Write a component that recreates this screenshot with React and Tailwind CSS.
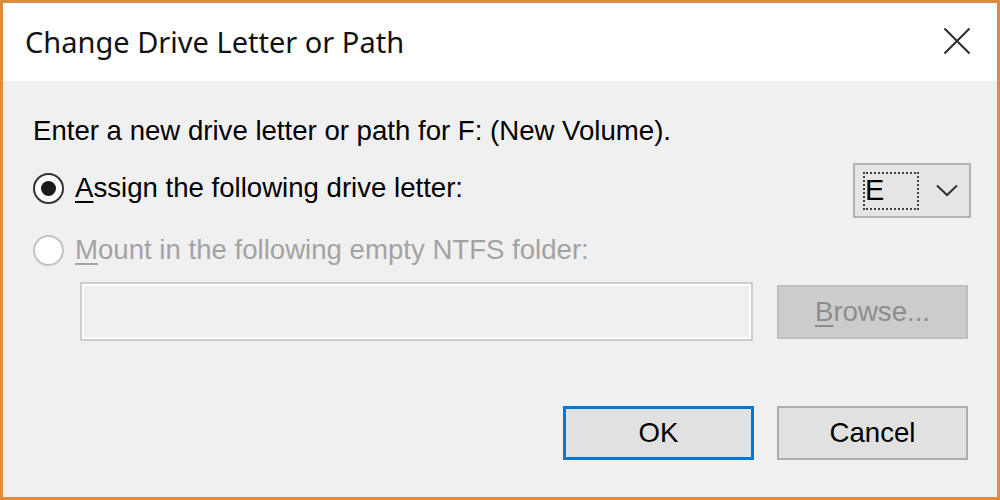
import React from "react";

const Radio = ({ checked, disabled }) => (
  <span
    className={`w-[31px] h-[31px] rounded-full border-2 flex items-center justify-center shrink-0 ${
      disabled ? "border-[#c4c4c4] bg-white" : "border-[#333333] bg-white"
    }`}
  >
    {checked && <span className="w-[15px] h-[15px] rounded-full bg-[#1b1b1b]" />}
  </span>
);

const Button = ({ children, focused, disabled }) => (
  <button
    className={`w-[191px] h-[54px] flex items-center justify-center leading-none ${
      focused
        ? "border-[3px] border-[#0078d7] bg-[#e1e1e1] text-black"
        : disabled
        ? "border-2 border-[#bfbfbf] bg-[#cccccc] text-[#8d8d8d]"
        : "border-2 border-[#adadad] bg-[#e1e1e1] text-black"
    }`}
  >
    {children}
  </button>
);

export default function App() {
  return (
    <div className="w-[1000px] h-[500px] border-[3px] border-[#dc8b3f] flex flex-col font-['Liberation_Sans',Arial,sans-serif] text-[27.6px] text-black">
      {/* title bar */}
      <div className="h-[78px] bg-white flex items-center justify-between pl-[22px] pr-[26px] shrink-0">
        <span className="font-['Noto_Sans',sans-serif] text-[29px] text-[#111]">Change Drive Letter or Path</span>
        <svg width="28" height="28" viewBox="0 0 28 28" className="mb-[3px]">
          <path d="M1.5 1.5 L26.5 26.5 M26.5 1.5 L1.5 26.5" stroke="#2b2b2b" strokeWidth="2" fill="none" />
        </svg>
      </div>

      {/* body */}
      <div className="flex-1 bg-[#f0f0f0] pl-[30px] pr-[29px] pt-[34px] flex flex-col">
        <p className="leading-[32px]">Enter a new drive letter or path for F: (New Volume).</p>

        <div className="mt-[16px] flex items-start justify-between">
          <label className="mt-[9px] h-[32px] flex items-center gap-[11px] leading-[32px]">
            <Radio checked />
            <span>
              <u className="underline-offset-[4px]">A</u>ssign the following drive letter:
            </span>
          </label>
          <div className="mr-[-3px] w-[118px] h-[55px] border-2 border-[#b3b3b3] bg-[#e5e5e5] flex items-center pl-[8px] pr-[11px]">
            <div className="w-[56px] h-[38px] border-2 border-dotted border-[#404040] flex items-center leading-none text-[29px]">
              E
            </div>
            <svg width="22" height="13" viewBox="0 0 22 13" className="ml-auto">
              <path d="M1 1.5 L11 11 L21 1.5" stroke="#333" strokeWidth="2" fill="none" />
            </svg>
          </div>
        </div>

        <label className="mt-[16px] h-[32px] flex items-center gap-[11px] leading-[32px] text-[#a3a3a3]">
          <Radio disabled />
          <span>
            <u className="underline-offset-[4px]">M</u>ount in the following empty NTFS folder:
          </span>
        </label>

        <div className="mt-[16px] pl-[47px] flex items-start gap-[24px]">
          <div className="w-[673px] h-[59px] border-2 border-[#cdcdcd] bg-[#f0f0f0] shadow-[inset_0_0_0_2px_#ffffff]" />
          <div className="mt-[3px]">
            <Button disabled>
              <span>
                <u className="underline-offset-[4px]">B</u>rowse...
              </span>
            </Button>
          </div>
        </div>

        <div className="mt-[65px] flex justify-end gap-[23px]">
          <Button focused>OK</Button>
          <Button>Cancel</Button>
        </div>
      </div>
    </div>
  );
}
